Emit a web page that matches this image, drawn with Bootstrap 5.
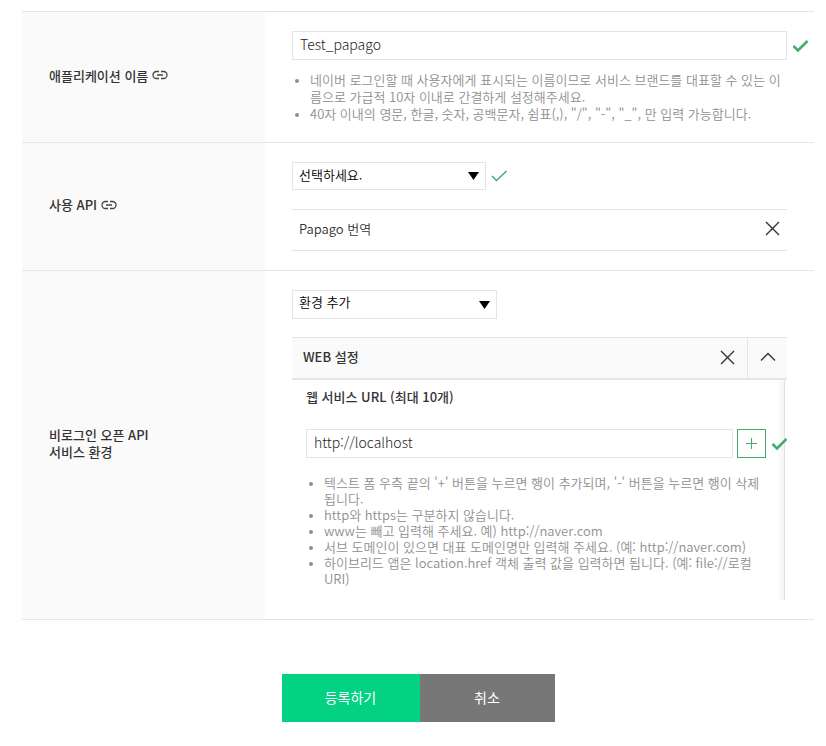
<!DOCTYPE html>
<html lang="ko">
<head>
<meta charset="utf-8">
<meta name="viewport" content="width=device-width, initial-scale=1">
<title>애플리케이션 등록</title>
<link rel="stylesheet" href="https://cdn.jsdelivr.net/npm/bootstrap@5.3.0/dist/css/bootstrap.min.css">
<style>
  body { font-family: "Noto Sans CJK KR", sans-serif; font-size: 13px; line-height: 17px; color: #333; background: #fff; }
  .page { padding: 11px 12px 24px 22px; }
  .form-line { border-top: 1px solid #e5e5e5; }
  .form-table { border-bottom: 1px solid #e5e5e5; }
  .line-head { flex: 0 0 243px; background: #fafafa; padding: 0 27px 4px; font-weight: 500; }
  .line-body { padding: 19px 0 19px 27px; min-width: 0; }
  .inset { margin-right: 27px; }
  .check-slot { flex: 0 0 22px; margin-left: 5px; }
  .field, .picker { border: 1px solid #e5e5e5; border-radius: 0; color: #222; box-shadow: none; }
  .field { height: 29px; padding: 0 7px 4px; font-size: 14px; font-weight: 300; font-family: "Noto Sans CJK KR", sans-serif; }
  .picker { height: 28px; padding: 0 24px 4px 6px; font-size: 13px; font-weight: 350; line-height: 17px; color: #000; background-position: right 6px center; background-size: 11px 8px;
    background-image: url("data:image/svg+xml,%3csvg xmlns='http://www.w3.org/2000/svg' viewBox='0 0 11 8'%3e%3cpath d='M0 0h11L5.500 8z'/%3e%3c/svg%3e"); }
  .picker-api { width: 194px; }
  .picker-env { width: 205px; height: 29px; padding-bottom: 6px; }
  .hints { color: #8f8f8f; font-weight: 350; padding-left: 18px; }
  .hints li::marker { font-size: 10px; }
  .hints-wide { margin: 11px 27px 1px 0; }
  .hints-tight { line-height: 16px; }
  .picked { height: 42px; border: solid #e5e5e5; border-width: 1px 0; margin-top: 19px; padding: 0 7px 3px; font-weight: 350; }
  .plain { border: 0; background: none; padding: 0; display: flex; align-items: center; justify-content: center; color: #333; }
  .env-head { height: 43px; margin-top: 18px; background: #fafafa; border: solid #e5e5e5; border-width: 1px 0 2px; font-weight: 500; padding-left: 11px; }
  .env-close, .env-fold { width: 40px; padding-bottom: 2px; }
  .env-fold { border-left: 1px solid #e5e5e5; }
  .env-body { margin-right: 2px; padding: 8px 20px 13px 14px; border-right: 1px solid #e0e0e0; background: linear-gradient(to left, #f5f5f5, #fff 8px); }
  .url-title { font-weight: 500; }
  .url-line { margin: 24px -23px 17px 0; }
  .add { flex: 0 0 29px; height: 29px; margin-left: 4px; border: 1px solid #40ad6b; border-radius: 0; background: #fff; }
  .check-cut { flex: 0 0 16px; margin-left: 5px; overflow: hidden; }
  .actions { margin-top: 54px; }
  .action { height: 48px; border: 0; border-radius: 0; color: #fff; font-size: 14px; font-weight: 400; padding: 0 0 2px; }
  .action-ok { width: 138px; background: #03d282; }
  .action-no { width: 135px; background: #777; }
</style>
</head>
<body>
<main class="page">
  <form>
    <div class="form-table">
      <div class="form-line d-flex">
        <div class="line-head d-flex align-items-center">
          <label for="appName">애플리케이션 이름</label>
          <svg class="ms-1" width="16" height="10" viewBox="0 0 16 10" fill="none" stroke="#444" stroke-width="1.300"><path d="M7 1.500H4.500A3.500 3.500 0 0 0 4.500 8.500H7M9 1.500H11.500A3.500 3.500 0 0 1 11.500 8.500H9M5 5H11"/></svg>
        </div>
        <div class="line-body flex-grow-1">
          <div class="d-flex align-items-center">
            <input id="appName" type="text" class="form-control field" value="Test_papago">
            <span class="check-slot d-flex"><svg width="17" height="14" viewBox="0 0 17 14" fill="none" stroke="#3dae6b" stroke-width="2.500"><path d="M1.500 7L6 11.500L15.500 2"/></svg></span>
          </div>
          <ul class="hints hints-wide">
            <li>네이버 로그인할 때 사용자에게 표시되는 이름이므로 서비스 브랜드를 대표할 수 있는 이름으로 가급적 10자 이내로 간결하게 설정해주세요.</li>
            <li>40자 이내의 영문, 한글, 숫자, 공백문자, 쉼표(,), "/", "-", "_", 만 입력 가능합니다.</li>
          </ul>
        </div>
      </div>
      <div class="form-line d-flex">
        <div class="line-head d-flex align-items-center">
          <label for="api">사용 API</label>
          <svg class="ms-1" width="16" height="10" viewBox="0 0 16 10" fill="none" stroke="#444" stroke-width="1.300"><path d="M7 1.500H4.500A3.500 3.500 0 0 0 4.500 8.500H7M9 1.500H11.500A3.500 3.500 0 0 1 11.500 8.500H9M5 5H11"/></svg>
        </div>
        <div class="line-body flex-grow-1">
          <div class="d-flex align-items-center">
            <select id="api" class="form-select picker picker-api"><option>선택하세요.</option></select>
            <span class="check-slot d-flex"><svg width="17" height="14" viewBox="0 0 17 14" fill="none" stroke="#3dae6b" stroke-width="1.500"><path d="M1 7L5.500 11.500L15.500 2"/></svg></span>
          </div>
          <div class="picked inset d-flex align-items-center justify-content-between">
            <span>Papago 번역</span>
            <button type="button" class="plain" aria-label="삭제"><svg width="15" height="15" viewBox="0 0 15 15" fill="none" stroke="#333" stroke-width="1.400"><path d="M1 1L14 14M14 1L1 14"/></svg></button>
          </div>
        </div>
      </div>
      <div class="form-line d-flex">
        <div class="line-head d-flex align-items-center"><label for="env">비로그인 오픈 API<br>서비스 환경</label></div>
        <div class="line-body flex-grow-1">
          <div class="inset">
            <select id="env" class="form-select picker picker-env"><option>환경 추가</option></select>
            <div class="env-head d-flex align-items-stretch">
              <span class="flex-grow-1 align-self-center pb-1">WEB 설정</span>
              <button type="button" class="plain env-close" aria-label="삭제"><svg width="15" height="15" viewBox="0 0 15 15" fill="none" stroke="#333" stroke-width="1.400"><path d="M1 1L14 14M14 1L1 14"/></svg></button>
              <button type="button" class="plain env-fold" aria-label="접기"><svg width="16" height="10" viewBox="0 0 16 10" fill="none" stroke="#333" stroke-width="1.400"><path d="M1 8.500L8 1.500L15 8.500"/></svg></button>
            </div>
            <div class="env-body">
              <label for="url" class="d-block url-title">웹 서비스 URL (최대 10개)</label>
              <div class="url-line d-flex align-items-center">
                <input id="url" type="text" class="form-control field" value="http://localhost">
                <button type="button" class="plain add" aria-label="추가"><svg width="11" height="11" viewBox="0 0 11 11" stroke="#3dae6b"><path d="M5.500 0V11M0 5.500H11"/></svg></button>
                <span class="check-cut d-flex"><svg class="flex-shrink-0" width="17" height="14" viewBox="0 0 17 14" fill="none" stroke="#3dae6b" stroke-width="2.500"><path d="M1.500 7L6 11.500L15.500 2"/></svg></span>
              </div>
              <ul class="hints hints-tight mb-0">
                <li>텍스트 폼 우측 끝의 '+' 버튼을 누르면 행이 추가되며, '-' 버튼을 누르면 행이 삭제됩니다.</li>
                <li>http와 https는 구분하지 않습니다.</li>
                <li>www는 빼고 입력해 주세요. 예) http://naver.com</li>
                <li>서브 도메인이 있으면 대표 도메인명만 입력해 주세요. (예: http://naver.com)</li>
                <li>하이브리드 앱은 location.href 객체 출력 값을 입력하면 됩니다. (예: file://로컬 URI)</li>
              </ul>
            </div>
          </div>
        </div>
      </div>
    </div>
    <div class="actions d-flex justify-content-center">
      <button type="submit" class="btn action action-ok">등록하기</button>
      <button type="button" class="btn action action-no">취소</button>
    </div>
  </form>
</main>
<script src="https://cdn.jsdelivr.net/npm/bootstrap@5.3.0/dist/js/bootstrap.bundle.min.js"></script>
</body>
</html>
